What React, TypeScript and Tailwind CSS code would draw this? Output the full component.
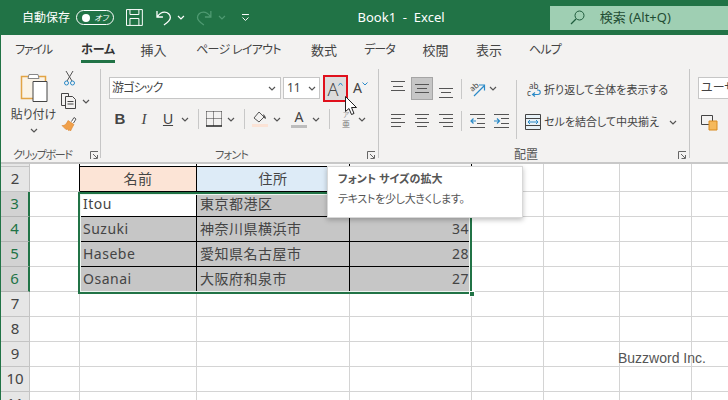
import type { ReactNode } from "react";

const FONT = "font-['Noto_Sans','Noto_Sans_CJK_JP',sans-serif] [font-feature-settings:'palt']";

function Chevron({ color = "#555", className = "" }: { color?: string; className?: string }) {
  return (
    <svg width="8" height="5" viewBox="0 0 8 5" className={className}>
      <path d="M1 1 L4 4 L7 1" fill="none" stroke={color} strokeWidth="1.2" />
    </svg>
  );
}

function Launcher() {
  return (
    <svg width="9" height="9" viewBox="0 0 9 9">
      <path d="M.5 8V.5H8M3 3l4 4M3.5 7.5H7.500V4" fill="none" stroke="#666" strokeWidth="1" />
    </svg>
  );
}

function Lines({ rows, width = 16, height = 20 }: { rows: [number, number, number][]; width?: number; height?: number }) {
  return (
    <svg width={width} height={height} viewBox={`0 0 ${width} ${height}`}>
      {rows.map(([x1, x2, y]) => (
        <line key={`${x1}-${y}`} x1={x1} x2={x2} y1={y + 0.5} y2={y + 0.5} stroke="#555" />
      ))}
    </svg>
  );
}

function IndentIcon({ flip }: { flip?: boolean }) {
  return (
    <svg width="15" height="14" viewBox="0 0 15 14">
      <path d="M0 .5h15M0 13.500h15M7 4.500h8M7 9.500h8" stroke="#555" fill="none" />
      {flip ? (
        <path d="M6 7H1M3.500 4.500L1 7l2.500 2.500" stroke="#2a8ac8" fill="none" strokeWidth="1.200" />
      ) : (
        <path d="M0 7h5M3 4.500L5.500 7 3 9.500" stroke="#2a8ac8" fill="none" strokeWidth="1.200" />
      )}
    </svg>
  );
}

function Sep({ className = "h-[20px]" }: { className?: string }) {
  return <div className={`w-px bg-[#c8c8c8] ${className}`} />;
}

function Slot({ className, children }: { className: string; children?: ReactNode }) {
  return <div className={`flex items-center justify-center shrink-0 ${className}`}>{children}</div>;
}

function TitleBar() {
  return (
    <div className="flex h-[35px] items-center bg-[#217346] text-white">
      <span className="ml-[22px] w-[55px] text-[12px]">自動保存</span>
      <div className="flex h-[15px] w-[38px] items-center justify-between rounded-full border border-white pl-[5px] pr-[5px]">
        <span className="h-[8px] w-[8px] rounded-full bg-white" />
        <span className="text-[8px] italic leading-none">オフ</span>
      </div>
      <svg width="17" height="17" viewBox="0 0 17 17" className="ml-[12px]">
        <path d="M.5.500h16v16H.5zM4 .500v5h9v-5M4 16.500v-7h9v7" fill="none" stroke="#fff" />
      </svg>
      <svg width="16" height="16" viewBox="0 0 16 16" className="ml-[13px]">
        <path d="M1 1v6h6M1.500 6.500C3.500 3.500 5.500 2 8.500 2 12 2 14.500 4.500 14.500 7.500c0 3-2.500 5-6.500 7.500" fill="none" stroke="#fff" strokeWidth="1.300" />
      </svg>
      <Chevron color="#fff" className="ml-[5px]" />
      <svg width="16" height="16" viewBox="0 0 16 16" className="ml-[11px]">
        <path d="M15 1v6H9M14.500 6.500C12.500 3.500 10.500 2 7.500 2 4 2 1.500 4.500 1.500 7.500c0 3 2.500 5 6.500 7.500" fill="none" stroke="#4f9a72" strokeWidth="1.300" />
      </svg>
      <Chevron color="#4f9a72" className="ml-[6px]" />
      <svg width="9" height="9" viewBox="0 0 9 9" className="ml-[15px]">
        <path d="M1 1.500h7M1.500 4.500L4.500 7.500l3-3" fill="none" stroke="#fff" />
      </svg>
      <span className="ml-[108px] w-[194px] text-[13px]">Book1&nbsp; -&nbsp; Excel</span>
      <div className="flex h-[24px] w-[180px] items-center bg-[#9fcfb3] text-[#1f4d33]">
        <svg width="15" height="15" viewBox="0 0 15 15" className="ml-[20px]">
          <circle cx="9.500" cy="5.500" r="4.500" fill="none" stroke="#1f5c3d" />
          <path d="M6 9L1 14" stroke="#1f5c3d" strokeWidth="1.200" />
        </svg>
        <span className="ml-[15px] text-[13px]">検索 (Alt+Q)</span>
      </div>
    </div>
  );
}

function Tabs() {
  const tabs = [
    ["ファイル", "ml-[14px] w-[37px] tracking-[-1.2px]"],
    ["ホーム", "ml-[29px] w-[34px]"],
    ["挿入", "ml-[26px] w-[25px] text-[13px]"],
    ["ページ レイアウト", "ml-[30px] w-[85px] tracking-[-0.7px]"],
    ["数式", "ml-[30px] w-[26px] text-[13px]"],
    ["データ", "ml-[27px] w-[31px] tracking-[-1px]"],
    ["校閲", "ml-[28px] w-[25px] text-[13px]"],
    ["表示", "ml-[28px] w-[26px] text-[13px]"],
    ["ヘルプ", "ml-[27px] w-[32px] tracking-[-0.7px]"],
  ];
  return (
    <div className="flex h-[29px] items-start bg-[#f3f2f1] text-[12px] text-[#444]">
      {tabs.map(([label, style]) => (
        <div key={label} className={`${style} flex h-[27px] flex-col items-center whitespace-nowrap pt-[7px] leading-[16px]`}>
          <span className={label === "ホーム" ? "font-bold text-[#333]" : ""}>{label}</span>
          {label === "ホーム" ? <span className="mt-[2px] h-[3px] w-[34px] shrink-0 bg-[#217346]" /> : null}
        </div>
      ))}
    </div>
  );
}

function GroupLabel({ label, className }: { label: string; className: string }) {
  return <div className={`whitespace-nowrap leading-[14px] text-[#555] ${className}`}>{label}</div>;
}

function ClipboardGroup() {
  return (
    <div className="mt-[5px] flex h-[89px] w-[100px] shrink-0 flex-col border-r border-[#c6c6c6]">
      <div className="flex h-[76px] shrink-0">
        <div className="flex w-[58px] flex-col items-center pl-[7px] pt-[4px]">
          <svg width="28" height="30" viewBox="0 0 28 30">
            <path d="M1.500 3.500h24v22H1.500z" fill="#faf3e6" stroke="#e2a444" strokeWidth="1.500" />
            <path d="M9 1.500h9l1 4H8z" fill="#fff" stroke="#888" />
            <path d="M13 8.500h14v20H13z" fill="#fff" stroke="#444" />
          </svg>
          <span className="mt-[3px] whitespace-nowrap text-[12px] leading-[18px] text-[#444]">貼り付け</span>
          <Chevron className="mt-[4px]" />
        </div>
        <div className="flex flex-col pl-[2px] pt-[1px]">
          <svg width="11" height="16" viewBox="0 0 11 16" className="ml-[3px]">
            <path d="M2 1l6 10M9 1L3 11" stroke="#555" fill="none" />
            <circle cx="2.500" cy="13" r="2" fill="none" stroke="#2a8ac8" />
            <circle cx="8.500" cy="13" r="2" fill="none" stroke="#2a8ac8" />
          </svg>
          <div className="mt-[7px] flex items-center gap-[5px]">
            <svg width="16" height="16" viewBox="0 0 16 16">
              <path d="M5 12.500H.5V.500h7V3" fill="none" stroke="#444" />
              <path d="M4.500 3.500h7l3 3v9h-10zM6.500 8.500h6M6.500 11h6" fill="none" stroke="#444" />
            </svg>
            <Chevron />
          </div>
          <svg width="16" height="16" viewBox="0 0 16 16" className="mt-[7px]">
            <path d="M10.500 5.500L13 1.500l2 1.500-2.500 4" fill="#fff" stroke="#555" />
            <path d="M7 4.500l6 4-1.500 2.500-2 4-1-1-1 .5-1-1.500-1.500.5L1 9.500c2.500.5 4.500-1.500 6-5z" fill="#f0a04a" stroke="#d9822b" strokeWidth=".6" />
          </svg>
        </div>
      </div>
      <div className="mt-[3px] flex items-center pl-[12px]">
        <GroupLabel label="クリップボード" className="w-[77px] text-[11px] tracking-[-1.3px]" />
        <Launcher />
      </div>
    </div>
  );
}

function FontGroup() {
  return (
    <div className="mt-[5px] flex h-[89px] w-[278px] shrink-0 flex-col border-r border-[#c6c6c6]">
      <div className="flex h-[29px] shrink-0 items-start pl-[8px]">
        <div className="mt-[8px] flex h-[22px] w-[172px] items-center justify-between border border-[#c6c6c6] bg-white pl-[2px] pr-[4px] text-[12px] text-[#444]">
          <span className="tracking-[-0.8px]">游ゴシック</span>
          <Chevron />
        </div>
        <div className="ml-[2px] mt-[8px] flex h-[22px] w-[37px] items-center justify-between border border-[#c6c6c6] bg-white pl-[3px] pr-[3px] text-[12px] text-[#444]">
          11
          <Chevron />
        </div>
        <div className="ml-[3px] mt-[6px] flex h-[27px] w-[25px] shrink-0 items-center justify-center border-2 border-[#e0101c] bg-[#dcdcdc]">
          <span className="text-[18px] font-light leading-none text-[#444]">A</span>
          <svg width="5" height="4" viewBox="0 0 5 4" className="mb-[9px]">
            <path d="M.5 3.500l2-2.500 2 2.500" fill="none" stroke="#2a8ac8" />
          </svg>
        </div>
        <div className="ml-[5px] mt-[9px] flex items-center">
          <span className="text-[14px] leading-[20px] text-[#444]">A</span>
          <svg width="6" height="4" viewBox="0 0 6 4" className="mb-[9px]">
            <path d="M.5.500l2.500 2.500 2.500-2.500" fill="none" stroke="#2a8ac8" />
          </svg>
        </div>
      </div>
      <div className="mt-[9px] flex h-[24px] shrink-0 items-center pl-[7px] text-[#444]">
        <Slot className="w-[24px] font-['Liberation_Sans'] text-[15px] font-bold">B</Slot>
        <Slot className="w-[24px] font-['Liberation_Serif'] text-[15px] italic">I</Slot>
        <Slot className="w-[24px] font-['Liberation_Sans'] text-[14px] underline">U</Slot>
        <Slot className="w-[10px]"><Chevron /></Slot>
        <Slot className="w-[16px]"><Sep /></Slot>
        <Slot className="w-[16px]">
          <svg width="16" height="16" viewBox="0 0 16 16">
            <path d="M.5.500h15M.5 7.500h15M.5.500V15M15.500.500V15M7.500 .500V15" fill="none" stroke="#333" strokeDasharray="1 1" />
            <path d="M0 15h16" stroke="#222" strokeWidth="1.500" />
          </svg>
        </Slot>
        <Slot className="w-[18px]"><Chevron /></Slot>
        <Slot className="w-[8px]"><Sep /></Slot>
        <Slot className="w-[24px]">
          <svg width="16" height="16" viewBox="0 0 16 16">
            <path d="M7 1L2 7l5 4 5-5z" fill="none" stroke="#555" />
            <path d="M11 3c2 1 3 3 3 5l-2-1z" fill="#555" />
            <path d="M0 13h16v3H0z" fill="#fbe3d6" />
          </svg>
        </Slot>
        <Slot className="w-[10px]"><Chevron /></Slot>
        <div className="ml-[5px] flex w-[24px] shrink-0 flex-col items-center">
          <span className="text-[14px] leading-[14px]">A</span>
          <span className="mt-[1px] h-[3px] w-[16px] bg-[#bdbdbd]" />
        </div>
        <Slot className="w-[10px]"><Chevron /></Slot>
        <Slot className="w-[16px]"><Sep /></Slot>
        <div className="flex w-[18px] shrink-0 flex-col items-center">
          <span className="text-[7px] leading-[9px] text-[#999]">ア</span>
          <span className="text-[8px] leading-[9px] text-[#777]">亜</span>
        </div>
        <Slot className="w-[14px]"><Chevron /></Slot>
      </div>
      <div className="mt-[17px] flex items-center">
        <GroupLabel label="フォント" className="ml-[114px] w-[152px] text-[11px] tracking-[-0.7px]" />
        <Launcher />
      </div>
    </div>
  );
}

function AlignmentGroup() {
  const lines = (a: number, b: number, c: number): [number, number, number][] => [
    [0, 14, a],
    [2, 12, b],
    [0, 14, c],
  ];
  return (
    <div className="mt-[5px] flex h-[89px] w-[311px] shrink-0 flex-col border-r border-[#c6c6c6]">
      <div className="flex h-[71px] shrink-0 pl-[8px]">
        <div className="w-[129px] shrink-0">
          <div className="mt-[8px] flex h-[23px] items-center">
            <Slot className="h-[23px] w-[22px]"><Lines rows={lines(2, 7, 11)} width={14} /></Slot>
            <Slot className="ml-[2px] h-[23px] w-[22px] border border-[#a5a5a5] bg-[#c6c6c6]"><Lines rows={lines(5, 9, 13)} width={14} /></Slot>
            <Slot className="ml-[2px] h-[23px] w-[22px]"><Lines rows={lines(9, 13, 18)} width={14} /></Slot>
            <Slot className="w-[8px]"><Sep /></Slot>
            <Slot className="ml-[4px] w-[17px]">
              <svg width="17" height="17" viewBox="0 0 17 17">
                <text x="1" y="10" fontSize="8" fill="#444" transform="rotate(-40 5 8)">ab</text>
                <path d="M5 16L15 6M10 5h5.500v5.500" stroke="#2a8ac8" fill="none" strokeWidth="1.200" />
              </svg>
            </Slot>
            <Chevron className="ml-[3px]" />
          </div>
          <div className="mt-[10px] flex h-[21px] items-center">
            <Slot className="w-[22px]"><Lines rows={[[0, 14, 3], [0, 10, 7], [0, 14, 11], [0, 10, 15]]} width={14} /></Slot>
            <Slot className="ml-[2px] w-[22px]"><Lines rows={[[0, 14, 3], [2, 12, 7], [0, 14, 11], [2, 12, 15]]} width={14} /></Slot>
            <Slot className="ml-[2px] w-[22px]"><Lines rows={[[0, 14, 3], [4, 14, 7], [0, 14, 11], [4, 14, 15]]} width={14} /></Slot>
            <Slot className="w-[8px]"><Sep /></Slot>
            <Slot className="ml-[4px] w-[16px]"><IndentIcon flip /></Slot>
            <Slot className="ml-[8px] w-[16px]"><IndentIcon /></Slot>
          </div>
        </div>
        <div className="mt-[11px] h-[59px] w-px shrink-0 bg-[#c8c8c8]" />
        <div className="pl-[8px] text-[11px] text-[#444]">
          <div className="mt-[10px] flex h-[22px] items-center whitespace-nowrap">
            <svg width="16" height="16" viewBox="0 0 16 16" className="ml-[1px] mr-[2px]">
              <text x="3" y="7" fontSize="8" fill="#444">ab</text>
              <text x="1" y="14" fontSize="8" fill="#444">c</text>
              <path d="M7 12.500h5c3 0 3-4.500 0-4.500h-1M9 10.500l-2.500 2 2.500 2" fill="none" stroke="#2a8ac8" strokeWidth="1.100" />
            </svg>
            折り返して全体を表示する
          </div>
          <div className="mt-[10px] flex h-[22px] items-center whitespace-nowrap">
            <svg width="16" height="16" viewBox="0 0 16 16" className="mr-[3px]">
              <path d="M.5.500h15v15H.5zM.5 4.500h15M.5 11.500h15" fill="#e8f2f8" stroke="#444" />
              <path d="M3 8h10M5 6L3 8l2 2M11 6l2 2-2 2" fill="none" stroke="#2a8ac8" />
            </svg>
            セルを結合して中央揃え
            <Chevron className="ml-[10px]" />
          </div>
        </div>
      </div>
      <div className="mt-[8px] flex items-center">
        <GroupLabel label="配置" className="ml-[135px] w-[164px] text-[12px]" />
        <Launcher />
      </div>
    </div>
  );
}

function StyleGroup() {
  return (
    <div className="mt-[5px] flex flex-col pl-[8px]">
      <div className="mt-[8px] flex h-[22px] w-[60px] items-center border border-[#c6c6c6] bg-white pl-[2px] text-[12px] text-[#444]">
        ユーザー
      </div>
      <svg width="17" height="16" viewBox="0 0 17 16" className="ml-[3px] mt-[16px]">
        <path d="M.5.500h11v9H.5z" fill="none" stroke="#444" />
        <path d="M8 6h8v9H8z" fill="#f5b95c" stroke="#d98a1f" />
      </svg>
    </div>
  );
}

const ROW_HEADS = [2, 3, 4, 5, 6, 7, 8, 9, 10, 11];
const SELECTED_ROWS = [3, 4, 5, 6];
const TABLE: Record<number, string[]> = {
  2: ["名前", "住所", ""],
  3: ["Itou", "東京都港区", ""],
  4: ["Suzuki", "神奈川県横浜市", "34"],
  5: ["Hasebe", "愛知県名古屋市", "28"],
  6: ["Osanai", "大阪府和泉市", "27"],
};

function RowHead({ row }: { row: number }) {
  const selected = SELECTED_ROWS.includes(row);
  return (
    <div
      className={
        selected
          ? "flex items-center justify-center border-b border-r-2 border-b-[#b5b5b5] border-r-[#217346] bg-[#d2d2d2] pb-[2px] text-[15px] text-[#217346]"
          : "flex items-center justify-center border-b border-r border-[#c4c4c4] bg-[#e6e6e6] pb-[2px] text-[15px] text-[#444]"
      }
    >
      {row}
    </div>
  );
}

function Row({ row }: { row: number }) {
  const data = TABLE[row];
  const blank = "border-b border-r border-[#d4d4d4] bg-white";
  return (
    <>
      <RowHead row={row} />
      <div className={data ? "border-b border-r border-b-[#d4d4d4] border-r-black bg-white" : blank} />
      {data ? (
        data.map((text, i) => {
          const isHead = row === 2;
          const fill = isHead
            ? i === 0
              ? "bg-[#fce4d6] justify-center"
              : "bg-[#ddebf7] justify-center"
            : row === 3 && i === 0
              ? "bg-white pl-[3px]"
              : i === 2
                ? "bg-[#c6c6c6] justify-end pr-[2px]"
                : "bg-[#c6c6c6] pl-[3px]";
          return (
            <div
              key={i}
              className={`flex items-center border-b border-r border-black pb-[2px] text-[14px] tracking-[0.5px] text-[#444] ${fill}`}
            >
              {text}
            </div>
          );
        })
      ) : (
        <>
          <div className={blank} />
          <div className={blank} />
          <div className={blank} />
        </>
      )}
      <div className={blank} />
      <div className={blank} />
      <div className={blank} />
      <div className="border-b border-[#d4d4d4] bg-white" />
    </>
  );
}

function Sheet() {
  const top = "border-r border-[#d4d4d4] bg-white";
  const topTable = "border-b border-r border-b-black border-r-black bg-white";
  return (
    <div className="relative flex-1 overflow-hidden border-t-2 border-[#c8c8c8]">
      <div className="grid grid-cols-[29px_50px_117px_153px_122px_72px_76px_72px_36px] grid-rows-[3px_repeat(10,25px)]">
        <div className="border-b border-r border-[#c4c4c4] bg-[#e6e6e6]" />
        <div className="border-r border-r-black bg-white" />
        <div className={topTable} />
        <div className={topTable} />
        <div className={topTable} />
        <div className={top} />
        <div className={top} />
        <div className={top} />
        <div className="bg-white" />
        {ROW_HEADS.map((row) => (
          <Row key={row} row={row} />
        ))}
      </div>

      {/* selection outline */}
      <div className="pointer-events-none absolute left-[77px] top-[28px] h-[102px] w-[394px] border-2 border-[#217346] shadow-[inset_0_0_0_1px_#eef5f0]" />
      <div className="absolute left-[468px] top-[127px] h-[6px] w-[6px] border border-white bg-[#217346]" />

      {/* tooltip */}
      <div className="absolute left-[326px] top-[2px] h-[52px] w-[196px] border border-[#d8d8d8] bg-white pl-[10px] pt-[3px] shadow-[0_2px_5px_rgba(0,0,0,0.25)]">
        <div className="text-[11px] font-bold leading-[18px] text-[#555]">フォント サイズの拡大</div>
        <div className="mt-[2px] text-[11px] leading-[18px] tracking-[-0.3px] text-[#555]">テキストを少し大きくします。</div>
      </div>

      {/* watermark */}
      <div className="absolute left-[617px] top-[184px] font-['Liberation_Sans'] text-[14px] text-[#555] [text-shadow:0_0_2px_#fff]">
        Buzzword Inc.
      </div>
    </div>
  );
}

export default function App() {
  return (
    <div className={`relative flex h-[400px] w-[728px] flex-col overflow-hidden bg-white ${FONT}`}>
      <TitleBar />
      <div className="flex min-h-0 flex-1 flex-col border-l border-[#217346]">
        <Tabs />
        <div className="flex h-[98px] shrink-0 overflow-hidden bg-[#f3f2f1]">
          <ClipboardGroup />
          <FontGroup />
          <AlignmentGroup />
          <StyleGroup />
        </div>
        <Sheet />
      </div>

      {/* mouse cursor */}
      <svg width="13" height="20" viewBox="0 0 13 20" className="absolute left-[345px] top-[96px]">
        <path d="M.5.500v15l3.500-3 2.500 6 2.500-1-2.500-6h5z" fill="#fff" stroke="#222" />
      </svg>
    </div>
  );
}
